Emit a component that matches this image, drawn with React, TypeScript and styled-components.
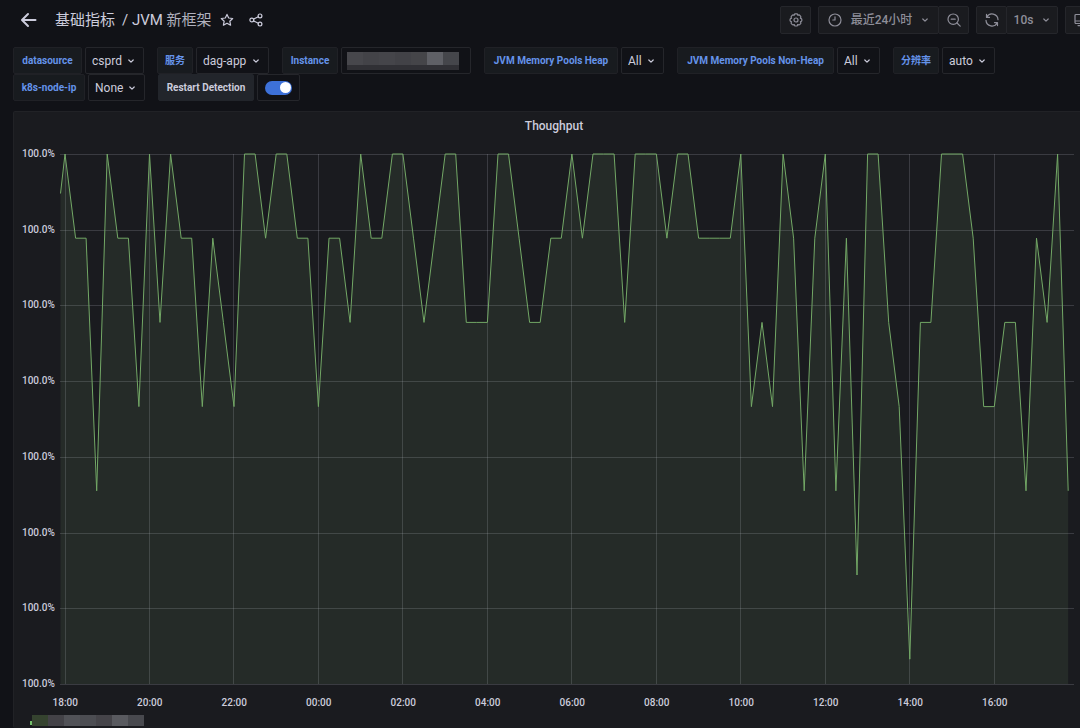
import React from "react";
import styled, { createGlobalStyle } from "styled-components";

const GlobalStyle = createGlobalStyle`
  *, *::before, *::after { box-sizing: border-box; }
  body {
    margin: 0;
    background: #111217;
    color: #ccccdc;
    font-family: Roboto, "Noto Sans CJK SC", sans-serif;
    font-size: 12px;
    line-height: 20px;
  }
  button, input, select { font: inherit; color: inherit; }
`;

const Page = styled.div`
  min-height: 100vh;
  overflow: hidden;
  display: flex;
  flex-direction: column;
`;

const Header = styled.header`
  display: flex;
  align-items: center;
  height: 40px;
  padding-left: 20px;
  margin-right: -16px;
  flex: none;
`;

const IconButton = styled.button`
  display: flex;
  padding: 0;
  border: 0;
  background: none;
  cursor: pointer;
`;

const Title = styled.h1`
  display: flex;
  gap: 7px;
  margin: 0 8px 0 18px;
  font-size: 15px;
  font-weight: 400;
  white-space: nowrap;
  a { color: inherit; text-decoration: none; }
`;

const TitleSuffix = styled.span`
  color: #b0b0bd;
`;

const TitleIcons = styled.div`
  display: flex;
  gap: 15px;
`;

const Toolbar = styled.div`
  display: flex;
  gap: 7px;
  margin-left: auto;
  color: #8e8e99;
`;

const ButtonGroup = styled.div`
  display: flex;
`;

const ToolButton = styled.button<{ $width: number }>`
  display: flex;
  align-items: center;
  justify-content: center;
  gap: 9px;
  width: ${(p) => p.$width}px;
  height: 28px;
  padding: 0;
  border: 1px solid #25262b;
  border-radius: 2px;
  background: #1a1b1f;
  font-weight: 500;
  white-space: nowrap;
  cursor: pointer;
  & + & { margin-left: -1px; }
`;

const Variables = styled.form`
  display: flex;
  flex-direction: column;
  padding: 7px 0 0 13px;
`;

const VariableRow = styled.div`
  display: flex;
  gap: 13px;
`;

const Variable = styled.div`
  display: flex;
  gap: 3px;
`;

const VariableLabel = styled.label<{ $width: number; $plain?: boolean }>`
  display: flex;
  align-items: center;
  justify-content: center;
  width: ${(p) => p.$width}px;
  height: 27px;
  border: 1px solid ${(p) => (p.$plain ? "#22252b" : "#202126")};
  border-radius: 2px;
  background: ${(p) => (p.$plain ? "#22252b" : "#181b1f")};
  color: ${(p) => (p.$plain ? "#ccccdc" : "#6593ea")};
  font-size: 10px;
  font-weight: 700;
  white-space: nowrap;
`;

const Field = styled.div<{ $width: number }>`
  position: relative;
  display: flex;
  align-items: center;
  width: ${(p) => p.$width}px;
  height: 27px;
  border: 1px solid #25262b;
  border-radius: 2px;
  > svg { position: absolute; right: 8px; pointer-events: none; }
`;

const Select = styled.select`
  appearance: none;
  width: 100%;
  height: 100%;
  padding: 0 0 0 6px;
  border: 0;
  background: transparent;
`;

const Switch = styled.input`
  appearance: none;
  display: flex;
  align-items: center;
  justify-content: flex-end;
  width: 27px;
  height: 14px;
  margin: 0 auto;
  padding: 0 1px;
  border-radius: 7px;
  background: #3d71d9;
  &::before {
    content: "";
    width: 11px;
    height: 11px;
    border-radius: 50%;
    background: #ffffff;
  }
  &:not(:checked) { justify-content: flex-start; background: #34363d; }
`;

const Mosaic = styled.span<{ $indent: number }>`
  display: flex;
  margin-left: ${(p) => p.$indent}px;
`;

const Tile = styled.span<{ $color: string; $lower?: string; $height: number }>`
  width: 16px;
  height: ${(p) => p.$height}px;
  background: ${(p) => p.$color};
  border-bottom: ${(p) => (p.$lower ? `5px solid ${p.$lower}` : "0")};
`;

const Panel = styled.section`
  flex: 1;
  display: flex;
  flex-direction: column;
  margin: 10px -16px 0 13px;
  padding: 0 21px 0 8px;
  border: 1px solid #212226;
  border-bottom: 0;
  border-radius: 2px;
  background: #1a1b1f;
`;

const PanelTitle = styled.h2`
  margin: 4px -12px 0 0;
  font-size: 12px;
  font-weight: 500;
  text-align: center;
`;

const Chart = styled.div`
  display: flex;
  margin-top: 18px;
  font-size: 10px;
  font-weight: 500;
`;

const YAxis = styled.div`
  display: flex;
  flex-direction: column;
  justify-content: space-between;
  width: 38px;
  height: 550px;
  margin-top: -10px;
  flex: none;
`;

const Plot = styled.svg`
  flex: 1;
  min-width: 0;
  height: 532px;
  overflow: visible;
`;

const XAxis = styled.div`
  display: grid;
  grid-template-columns: repeat(12, 1fr);
  margin: 0 37px 0 1px;
  font-size: 10px;
  font-weight: 500;
  line-height: 18px;
  text-align: center;
`;

const Legend = styled.div`
  display: flex;
  align-items: center;
  height: 11px;
  margin: 3px 0 2px 8px;
`;

const Swatch = styled.span`
  width: 2px;
  height: 4px;
  margin-top: 5px;
  background: #73bf69;
`;

const strokeProps = {
  fill: "none",
  stroke: "currentColor",
  strokeWidth: 1.2,
  strokeLinecap: "round" as const,
  strokeLinejoin: "round" as const,
};

const Chevron = () => (
  <svg width="8" height="8" viewBox="0 0 8 8" {...strokeProps}>
    <path d="M1.8 3 4 5.2 6.2 3" />
  </svg>
);

const ArrowLeft = () => (
  <svg width="17" height="16" viewBox="0 0 17 16" {...strokeProps} strokeWidth={2}>
    <path d="M15.5 8H2.4M8 2 2 8l6 6" />
  </svg>
);

const Star = () => (
  <svg width="14" height="14" viewBox="0 0 14 14" {...strokeProps}>
    <path d="M7 1.4 8.7 5l4 .5-2.9 2.7.8 4L7 10.2l-3.6 2 .8-4L1.3 5.5l4-.5Z" />
  </svg>
);

const Share = () => (
  <svg width="14" height="14" viewBox="0 0 14 14" {...strokeProps}>
    <circle cx="2.8" cy="7" r="1.9" />
    <circle cx="11" cy="2.9" r="1.9" />
    <circle cx="11" cy="11.1" r="1.9" />
    <path d="m4.6 6.1 4.7-2.3M4.6 7.9l4.7 2.3" />
  </svg>
);

const Gear = () => (
  <svg width="14" height="14" viewBox="0 0 14 14" {...strokeProps}>
    <path d="m5.6 1.1.5-.3h1.8l.5.3.4 1.1 1.1-.3.7.2 1.1 1.2.2.8-.5 1 1.1.6.3.5v1.6l-.3.5-1.1.5.5 1.1-.2.7-1.1 1.1-.8.2-1.1-.4-.4 1.2-.5.3H6.2l-.5-.3-.5-1.2-1 .4-.8-.2-1.1-1.1-.2-.7.4-1.1-1.1-.5-.3-.5V6.2l.3-.5 1.1-.6-.4-1 .2-.8 1.1-1.2.8-.2 1 .3Z" />
    <circle cx="7" cy="7" r="2" />
  </svg>
);

const Clock = () => (
  <svg width="14" height="14" viewBox="0 0 14 14" {...strokeProps}>
    <circle cx="7" cy="7" r="6" />
    <path d="M7 3.8V7H4.8" />
  </svg>
);

const ZoomOut = () => (
  <svg width="14" height="14" viewBox="0 0 14 14" {...strokeProps}>
    <circle cx="6.2" cy="6.2" r="5.2" />
    <path d="m10 10 3.2 3.2M4.2 6.2h4" />
  </svg>
);

const Refresh = () => (
  <svg width="14" height="14" viewBox="0 0 14 14" {...strokeProps}>
    <path d="M1.5 1.4v3h3M1.7 4.2A6 6 0 0 1 13 6.6M12.5 12.6v-3h-3M12.3 9.8A6 6 0 0 1 1 7.4" />
  </svg>
);

const Monitor = () => (
  <svg width="14" height="14" viewBox="0 0 14 14" {...strokeProps}>
    <path d="M2 1.5h10a1 1 0 0 1 1 1v7a1 1 0 0 1-1 1H2a1 1 0 0 1-1-1v-7a1 1 0 0 1 1-1ZM1 8h12M7 10.5v2M4 12.6h6" />
  </svg>
);

type VariablePickerProps = {
  id: string;
  label: string;
  value: string;
  labelWidth: number;
  width: number;
};

const VariablePicker = ({ id, label, value, labelWidth, width }: VariablePickerProps) => (
  <Variable>
    <VariableLabel htmlFor={id} $width={labelWidth}>{label}</VariableLabel>
    <Field $width={width}>
      <Select id={id} defaultValue={value}>
        <option>{value}</option>
      </Select>
      <Chevron />
    </Field>
  </Variable>
);

// One sample per 15 minutes from 18:00; each value counts steps below the maximum.
const samples = [
  0, 1, 1, 4, 0, 1, 1, 3, 0, 2, 0, 1, 1, 3, 1, 2, 3, 0, 0, 1, 0, 0, 1, 1,
  3, 1, 1, 2, 0, 1, 1, 0, 0, 1, 2, 1, 0, 0, 2, 2, 2, 0, 0, 1, 2, 2, 1, 1,
  0, 1, 0, 0, 0, 2, 0, 0, 0, 1, 0, 0, 1, 1, 1, 1, 0, 3, 2, 3, 0, 1, 4, 1,
  0, 4, 1, 5, 0, 0, 2, 3, 6, 2, 2, 0, 0, 0, 1, 3, 3, 2, 2, 4, 1, 2, 0, 4,
];

const PLOT_WIDTH = 1014;
const PLOT_HEIGHT = 530;
const FIRST_X = 5;
const STEP_X = 10.56;
const STEP_Y = 84.2;
const hours = ["18:00", "20:00", "22:00", "00:00", "02:00", "04:00", "06:00", "08:00", "10:00", "12:00", "14:00", "16:00"];
const rows = Array.from({ length: 8 }, (_, i) => i);

const points = [
  "0.5,39.5",
  ...samples.map((s, i) => `${(FIRST_X + i * STEP_X).toFixed(1)},${(s * STEP_Y).toFixed(1)}`),
].join(" ");
const lastX = FIRST_X + (samples.length - 1) * STEP_X;

const instanceTiles = ["#47474c", "#434348", "#45454a", "#424247", "#454549", "#5f6066", "#45464b"];
const legendTiles = ["#35432f", "#434247", "#515257", "#4c4d52", "#454449", "#595a5f", "#48494e"];

export default function App() {
  return (
    <Page>
      <GlobalStyle />
      <Header>
        <IconButton aria-label="Back"><ArrowLeft /></IconButton>
        <Title>
          <a href="#folder">基础指标</a>
          <a href="#dashboard">/ JVM <TitleSuffix>新框架</TitleSuffix></a>
        </Title>
        <TitleIcons>
          <IconButton aria-label="Favorite"><Star /></IconButton>
          <IconButton aria-label="Share"><Share /></IconButton>
        </TitleIcons>
        <Toolbar>
          <ToolButton $width={31} aria-label="Settings"><Gear /></ToolButton>
          <ButtonGroup>
            <ToolButton $width={121}><Clock />最近24小时<Chevron /></ToolButton>
            <ToolButton $width={31} aria-label="Zoom out"><ZoomOut /></ToolButton>
          </ButtonGroup>
          <ButtonGroup>
            <ToolButton $width={31} aria-label="Refresh"><Refresh /></ToolButton>
            <ToolButton $width={52}>10s<Chevron /></ToolButton>
          </ButtonGroup>
          <ToolButton $width={31} aria-label="View mode"><Monitor /></ToolButton>
        </Toolbar>
      </Header>

      <Variables>
        <VariableRow>
          <VariablePicker id="datasource" label="datasource" value="csprd" labelWidth={69} width={59} />
          <VariablePicker id="service" label="服务" value="dag-app" labelWidth={36} width={73} />
          <Variable>
            <VariableLabel as="span" $width={56}>Instance</VariableLabel>
            <Field $width={130}>
              <Mosaic $indent={5}>
                {instanceTiles.map((c, i) => <Tile key={i} $color={c} $lower="#303035" $height={18} />)}
              </Mosaic>
            </Field>
          </Variable>
          <VariablePicker id="heap" label="JVM Memory Pools Heap" value="All" labelWidth={134} width={43} />
          <VariablePicker id="nonheap" label="JVM Memory Pools Non-Heap" value="All" labelWidth={157} width={43} />
          <VariablePicker id="resolution" label="分辨率" value="auto" labelWidth={46} width={53} />
        </VariableRow>
        <VariableRow>
          <VariablePicker id="node" label="k8s-node-ip" value="None" labelWidth={72} width={57} />
          <Variable>
            <VariableLabel htmlFor="restart" $width={96} $plain>Restart Detection</VariableLabel>
            <Field $width={43}>
              <Switch id="restart" type="checkbox" role="switch" defaultChecked />
            </Field>
          </Variable>
        </VariableRow>
      </Variables>

      <Panel>
        <PanelTitle>Thoughput</PanelTitle>
        <Chart>
          <YAxis>{rows.map((r) => <span key={r}>100.0%</span>)}</YAxis>
          <Plot viewBox={`0 0 ${PLOT_WIDTH} 532`} preserveAspectRatio="none" role="img" aria-label="Thoughput">
            <g stroke="#ccccdc" strokeOpacity="0.18">
              {rows.map((r) => {
                const y = Math.round((r * PLOT_HEIGHT) / 7) + 0.5;
                return <line key={r} x1="0" x2={PLOT_WIDTH} y1={y} y2={y} />;
              })}
              {hours.map((h, i) => {
                const x = Math.round(FIRST_X + i * 8 * STEP_X - 0.5) + 0.5;
                return <line key={h} x1={x} x2={x} y1="0" y2={PLOT_HEIGHT} />;
              })}
            </g>
            <polygon points={`0.5,${PLOT_HEIGHT} ${points} ${lastX},${PLOT_HEIGHT}`} fill="#8cb880" fillOpacity="0.1" />
            <polyline points={points} fill="none" stroke="#73a866" strokeWidth="1" vectorEffect="non-scaling-stroke" />
          </Plot>
        </Chart>
        <XAxis>{hours.map((h) => <span key={h}>{h}</span>)}</XAxis>
        <Legend>
          <Swatch />
          <Mosaic $indent={0}>
            {legendTiles.map((c, i) => <Tile key={i} $color={c} $height={11} />)}
          </Mosaic>
        </Legend>
      </Panel>
    </Page>
  );
}
